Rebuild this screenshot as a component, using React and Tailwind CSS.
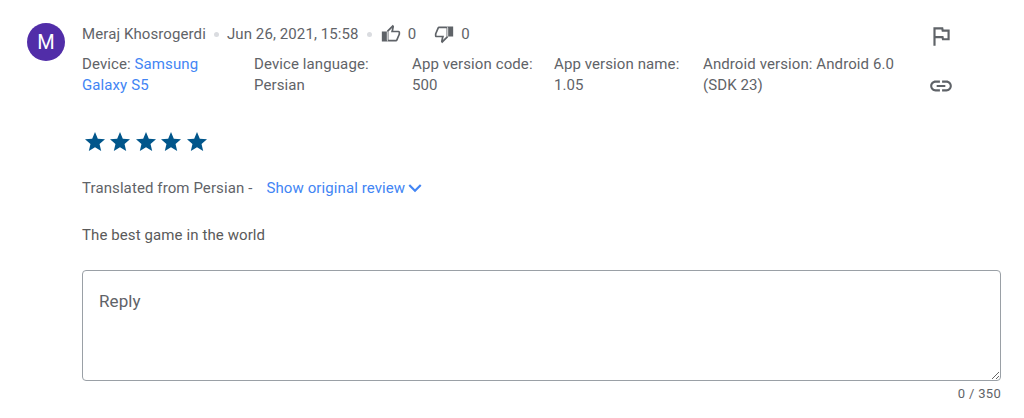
import React from "react";

const Thumb = ({ down }) => (
  <svg width="20" height="20" viewBox="0 0 24 24" fill="#5f6368" className={down ? "rotate-180" : ""}>
    <path d="M9 21h9c.83 0 1.54-.5 1.84-1.22l3.02-7.05c.09-.23.14-.47.14-.73v-2c0-1.1-.9-2-2-2h-6.31l.95-4.57.03-.32c0-.41-.17-.79-.44-1.06L14.17 1 7.58 7.59C7.22 7.95 7 8.45 7 9v10c0 1.1.9 2 2 2zM9 9l4.34-4.34L12 10h9v2l-3 7H9V9zM1 9h7v12H1z" />
  </svg>
);

export default function App() {
  return (
    <div className="w-[1024px] h-[418px] bg-white overflow-hidden flex pl-[27px] pt-[23px] text-[15px] tracking-[0.1px] leading-[22px] text-[#5f6368] font-['Roboto',sans-serif]">
      <div className="w-[38px] h-[38px] rounded-full bg-[#512da8] text-white text-[20px] flex items-center justify-center shrink-0">M</div>
      <div className="ml-[17px] w-[919px] flex flex-col">
        <div className="flex">
          <div className="w-[847px]">
            <div className="flex items-center h-[22px]">
              <span>Meraj Khosrogerdi</span>
              <span className="w-[5px] h-[5px] rounded-full bg-[#dadce0] ml-[8px] mr-[8px]" />
              <span>Jun 26, 2021, 15:58</span>
              <span className="w-[5px] h-[5px] rounded-full bg-[#dadce0] ml-[8px] mr-[9px]" />
              <Thumb />
              <span className="ml-[7px]">0</span>
              <span className="ml-[18px] flex"><Thumb down /></span>
              <span className="ml-[7px]">0</span>
            </div>
            <div className="flex mt-[9px] leading-[21px]">
              <div className="w-[172px] pr-[40px]">Device: <span className="text-[#4285f4]">Samsung Galaxy S5</span></div>
              <div className="w-[158px]">Device language:<br />Persian</div>
              <div className="w-[142px]">App version code:<br />500</div>
              <div className="w-[149px]">App version name:<br />1.05</div>
              <div className="w-[200px]">Android version: Android 6.0 (SDK 23)</div>
            </div>
          </div>
          <div className="flex flex-col items-center w-[26px] -ml-[1px] mt-0 gap-[24px]">
            <svg width="26" height="26" viewBox="0 0 24 24" fill="#5f6368"><path d="M12.36 6l.4 2H18v6h-3.36l-.4-2H7V6h5.36M14 4H5v17h2v-7h5.6l.4 2h7V6h-5.6L14 4z" /></svg>
            <svg width="26" height="26" viewBox="0 0 24 24" fill="#5f6368"><path d="M3.9 12c0-1.71 1.39-3.1 3.1-3.1h4V7H7c-2.76 0-5 2.24-5 5s2.24 5 5 5h4v-1.9H7c-1.71 0-3.1-1.39-3.1-3.1zM8 13h8v-2H8v2zm9-6h-4v1.9h4c1.71 0 3.1 1.39 3.1 3.1s-1.39 3.1-3.1 3.1h-4V17h4c2.76 0 5-2.24 5-5s-2.24-5-5-5z" /></svg>
          </div>
        </div>
        <div className="flex mt-[31px] h-[24px] gap-[1.4px] ml-[1px]">
          {[0, 1, 2, 3, 4].map((i) => (
            <svg key={i} width="24" height="24" viewBox="0 0 24 24" fill="#01568b"><path d="M12 17.27L18.18 21l-1.64-7.03L22 9.24l-7.19-.61L12 2 9.19 8.63 2 9.24l5.46 4.73L5.82 21z" /></svg>
          ))}
        </div>
        <div className="flex items-center mt-[23px] h-[22px]">
          <span>Translated from Persian -</span>
          <span className="ml-[14px] text-[#4285f4]">Show original review</span>
          <svg width="26" height="26" viewBox="0 0 24 24" fill="#4285f4" className="-ml-[3px]"><path d="M7.41 8.59L12 13.17l4.59-4.58L18 10l-6 6-6-6z" /></svg>
        </div>
        <div className="mt-[25px] text-[#5a5a5a]">The best game in the world</div>
        <textarea
          placeholder="Reply"
          className="mt-[24px] w-[919px] h-[111px] block border border-[#9aa0a6] rounded-[4px] px-4 py-[18px] text-[17px] leading-[24px] resize-y outline-none placeholder:text-[#5f6368] placeholder:opacity-100"
        />
        <div className="w-[919px] text-right text-[13px] tracking-[0.3px] leading-[16px] mt-[5px]">0 / 350</div>
      </div>
    </div>
  );
}
